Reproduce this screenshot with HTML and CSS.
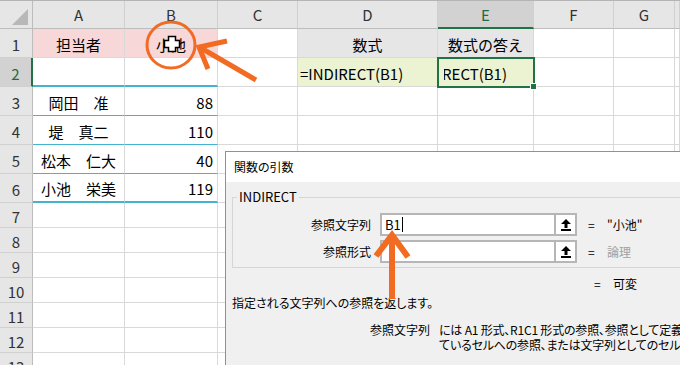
FILE: index.html
```html
<!DOCTYPE html>
<html lang="ja">
<head>
    <meta charset="UTF-8">
    <title>INDIRECT 関数</title>
    <link rel="stylesheet" href="styles.css">
</head>
<body>
    <div class="sheet">
        <div class="corner"><div class="tri"></div></div>
        <div class="h">A</div>
        <div class="h">B</div>
        <div class="h">C</div>
        <div class="h">D</div>
        <div class="h on">E</div>
        <div class="h">F</div>
        <div class="h">G</div>
        <div class="h"></div>

        <div class="r">1</div>
        <div class="c pink mid">担当者</div>
        <div class="c pink mid">小池</div>
        <div class="c"></div>
        <div class="c gray mid">数式</div>
        <div class="c gray mid">数式の答え</div>
        <div class="c"></div><div class="c"></div><div class="c"></div>

        <div class="r on">2</div>
        <div class="c cy2"></div>
        <div class="c cy2"></div>
        <div class="c"></div>
        <div class="c green">=INDIRECT(B1)</div>
        <div class="c green sel"><div class="clip"><span>=INDIRECT(B1)</span></div></div>
        <div class="c"></div><div class="c"></div><div class="c"></div>

        <div class="r">3</div>
        <div class="c cy1 mid">岡田　准</div>
        <div class="c cy1 num">88</div>
        <div class="c"></div><div class="c"></div><div class="c"></div><div class="c"></div><div class="c"></div><div class="c"></div>

        <div class="r">4</div>
        <div class="c cy1 mid">堤　真二</div>
        <div class="c cy1 num">110</div>
        <div class="c"></div><div class="c"></div><div class="c"></div><div class="c"></div><div class="c"></div><div class="c"></div>

        <div class="r">5</div>
        <div class="c cy1 mid">松本　仁大</div>
        <div class="c cy1 num">40</div>
        <div class="c"></div><div class="c"></div><div class="c"></div><div class="c"></div><div class="c"></div><div class="c"></div>

        <div class="r">6</div>
        <div class="c cy2 mid">小池　栄美</div>
        <div class="c cy2 num">119</div>
        <div class="c"></div><div class="c"></div><div class="c"></div><div class="c"></div><div class="c"></div><div class="c"></div>

        <div class="r">7</div>
        <div class="c"></div><div class="c"></div><div class="c"></div><div class="c"></div><div class="c"></div><div class="c"></div><div class="c"></div><div class="c"></div>
        <div class="r">8</div>
        <div class="c"></div><div class="c"></div><div class="c"></div><div class="c"></div><div class="c"></div><div class="c"></div><div class="c"></div><div class="c"></div>
        <div class="r">9</div>
        <div class="c"></div><div class="c"></div><div class="c"></div><div class="c"></div><div class="c"></div><div class="c"></div><div class="c"></div><div class="c"></div>
        <div class="r">10</div>
        <div class="c"></div><div class="c"></div><div class="c"></div><div class="c"></div><div class="c"></div><div class="c"></div><div class="c"></div><div class="c"></div>
        <div class="r">11</div>
        <div class="c"></div><div class="c"></div><div class="c"></div><div class="c"></div><div class="c"></div><div class="c"></div><div class="c"></div><div class="c"></div>
        <div class="r">12</div>
        <div class="c"></div><div class="c"></div><div class="c"></div><div class="c"></div><div class="c"></div><div class="c"></div><div class="c"></div><div class="c"></div>
        <div class="r">13</div>
        <div class="c"></div><div class="c"></div><div class="c"></div><div class="c"></div><div class="c"></div><div class="c"></div><div class="c"></div><div class="c"></div>
    </div>

    <!-- 関数の引数ダイアログ -->
    <div class="dialog">
        <div class="title">関数の引数</div>
        <div class="dbody">
            <fieldset class="group">
                <legend>INDIRECT</legend>
                <div class="arg first">
                    <label>参照文字列</label>
                    <div class="input">
                        <span class="val">B1</span><span class="caret"></span>
                        <span class="pick">
                            <svg width="10" height="12" viewBox="0 0 10 12"><path d="M5 0 L10 5 L6.5 5 L6.5 9 L3.5 9 L3.5 5 L0 5 Z" fill="#000"/><rect x="0" y="10" width="10" height="2" fill="#000"/></svg>
                        </span>
                    </div>
                    <span class="eq">=</span>
                    <span class="res">"小池"</span>
                </div>
                <div class="arg">
                    <label>参照形式</label>
                    <div class="input">
                        <span class="pick">
                            <svg width="10" height="12" viewBox="0 0 10 12"><path d="M5 0 L10 5 L6.5 5 L6.5 9 L3.5 9 L3.5 5 L0 5 Z" fill="#000"/><rect x="0" y="10" width="10" height="2" fill="#000"/></svg>
                        </span>
                    </div>
                    <span class="eq">=</span>
                    <span class="res muted">論理</span>
                </div>
            </fieldset>
            <div class="total"><span class="eq">=</span><span class="res">可変</span></div>
            <p class="desc">指定される文字列への参照を返します。</p>
            <div class="argdesc">
                <span class="argname">参照文字列</span>
                <div class="argtext">には A1 形式、R1C1 形式の参照、参照として定義され<br>ているセルへの参照、または文字列としてのセルへの参照を指定します。</div>
            </div>
        </div>
    </div>

    <!-- 注釈 (丸と矢印) -->
    <svg class="marks" width="680" height="365" viewBox="0 0 680 365">
        <polygon points="168.5,36.5 175.5,36.5 175.5,40.5 179.5,40.5 179.5,47.5 175.5,47.5 175.5,51.5 168.5,51.5 168.5,47.5 164.5,47.5 164.5,40.5 168.5,40.5" fill="#fff" stroke="#000" stroke-width="1.5"/>
        <ellipse cx="171" cy="45" rx="24" ry="23" fill="none" stroke="#f26b23" stroke-width="3"/>
        <line x1="256" y1="80" x2="201" y2="48" stroke="#f26b23" stroke-width="5"/>
        <polyline points="227,41 199,47 208,69" fill="none" stroke="#f26b23" stroke-width="5"/>
        <line x1="392" y1="299" x2="392" y2="238" stroke="#f26b23" stroke-width="6"/>
        <polyline points="376,256 392,235 408,257" fill="none" stroke="#f26b23" stroke-width="6"/>
    </svg>
</body>
</html>
```

FILE: styles.css
```css
body {
    margin: 0;
    width: 680px;
    height: 365px;
    overflow: hidden;
    position: relative;
    background: white;
    font-family: "Noto Sans CJK JP", sans-serif;
}

.sheet {
    display: grid;
    grid-template-columns: 33px 92px 93px 80px 140px 96px 80px 61px 5px;
    grid-template-rows: 28px repeat(6, 29px) repeat(7, 25px);
    border-top: 1px solid #b4b4b4;
    font-size: 15px;
    color: #000;
}

.corner {
    background: #e6e6e6;
    border-right: 1px solid #bdbdbd;
    border-bottom: 1px solid #bdbdbd;
    display: flex;
    align-items: flex-end;
    justify-content: flex-end;
    padding: 0 4px 3px 0;
}

.tri {
    width: 0;
    height: 0;
    border-left: 16px solid transparent;
    border-bottom: 16px solid #b8b8b8;
}

.h {
    background: #e6e6e6;
    border-right: 1px solid #d0d0d0;
    border-bottom: 1px solid #bdbdbd;
    display: flex;
    align-items: center;
    justify-content: center;
    color: #333;
}

.h.on {
    background: #d2d2d2;
    color: #1e6b41;
    border-bottom: 2px solid #217346;
}

.r {
    background: #e6e6e6;
    border-right: 1px solid #bdbdbd;
    border-bottom: 1px solid #d0d0d0;
    display: flex;
    align-items: center;
    justify-content: center;
    color: #333;
    padding-top: 2px;
}

.r.on {
    background: #d2d2d2;
    color: #1e6b41;
    border-right: 2px solid #217346;
}

.c {
    border-right: 1px solid #d9d9d9;
    border-bottom: 1px solid #d9d9d9;
    display: flex;
    align-items: center;
    padding: 2px 2px 0;
    white-space: nowrap;
    overflow: hidden;
}

.mid { justify-content: center; }
.num { justify-content: flex-end; padding-right: 4px; }

.pink { background: #f7d7d8; }
.gray { background: #e7e6e6; }
.green { background: #ebf3d3; }

.cy1 { border-bottom: 1px solid #43b4d0; }
.cy2 { border-bottom: 2px solid #43b4d0; }

.sel {
    justify-content: flex-end;
    padding-right: 26px;
    outline: 2px solid #217346;
    outline-offset: -1px;
    position: relative;
    overflow: visible;
    z-index: 1;
}

.clip {
    width: 63px;
    overflow: hidden;
    display: flex;
    justify-content: flex-end;
}

.clip span {
    flex: none;
}

.sel::after {
    content: "";
    position: absolute;
    right: -4px;
    bottom: -4px;
    width: 5px;
    height: 5px;
    background: #217346;
    border: 1px solid #fff;
}

/* ダイアログ */
.dialog {
    position: absolute;
    left: 225px;
    top: 151px;
    width: 480px;
    height: 240px;
    border: 1px solid #5aa0d6;
    background: #f0f0f0;
    font-size: 12px;
    font-feature-settings: "palt";
    color: #000;
    z-index: 2;
}

.title {
    background: white;
    height: 30px;
    line-height: 30px;
    padding-left: 8px;
}

.dbody {
    padding: 0 6px;
}

.group {
    margin: 7px 0 0;
    padding: 0 0 4px;
    border: 1px solid #d5d5d5;
    width: 470px;
}

.group legend {
    margin-left: 4px;
    padding: 0 2px;
    font-size: 13px;
    line-height: 16px;
    font-feature-settings: normal;
}

.arg {
    display: flex;
    align-items: center;
    height: 23px;
    margin-top: 4px;
}

.arg.first {
    margin-top: 8px;
}

.arg label {
    width: 138px;
    margin-right: 9px;
    text-align: right;
}

.input {
    box-sizing: border-box;
    width: 197px;
    height: 23px;
    border: 2px solid #b6b6b6;
    background: white;
    display: flex;
    align-items: center;
}

.val {
    padding-left: 3px;
    font-size: 13px;
}

.caret {
    width: 1px;
    height: 15px;
    background: #000;
    margin-left: 1px;
}

.pick {
    margin-left: auto;
    width: 19px;
    height: 100%;
    border-left: 2px solid #b6b6b6;
    background: white;
    display: flex;
    align-items: center;
    justify-content: center;
}

.eq {
    margin-left: 11px;
    width: 8px;
}

.res {
    margin-left: 11px;
}

.muted {
    color: #a0a0a0;
}

.total {
    display: flex;
    height: 16px;
    line-height: 16px;
    margin: 8px 0 0 351px;
}

.desc {
    margin: 3px 0 0;
    line-height: 16px;
}

.argdesc {
    display: flex;
    margin-top: 11px;
    line-height: 15px;
    white-space: nowrap;
}

.argname {
    margin-left: 138px;
    width: 69px;
    flex: none;
}

.argtext {
    letter-spacing: -0.2px;
}

.marks {
    position: absolute;
    left: 0;
    top: 0;
    z-index: 3;
    pointer-events: none;
}
```
